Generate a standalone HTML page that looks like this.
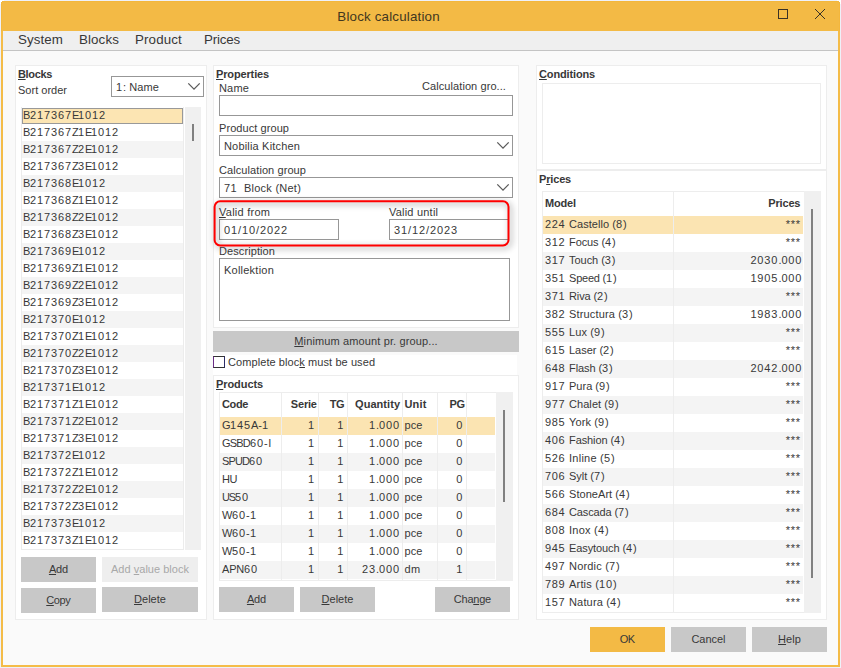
<!DOCTYPE html>
<html lang="en">
<head>
<meta charset="utf-8">
<title>Block calculation</title>
<style>
*{box-sizing:border-box;margin:0;padding:0}
html,body{width:841px;height:668px;overflow:hidden;background:#eef1f9}
body{font-family:"Liberation Sans",sans-serif;font-size:11px;color:#383838;position:relative}
body>*{position:absolute;white-space:nowrap}
u{text-decoration:underline;text-underline-offset:1px;text-decoration-thickness:1px}
.win{left:1px;top:1px;width:839px;height:666px;border:2px solid #f4bc48;background:#fafafa}
.title{left:1px;top:1px;width:839px;height:30px;background:#f3ba45;border:1px solid #f3b73c;border-bottom:0}
.cw{background:#fff}
.ttl{color:#42371f}
.ttl,.mi{font-size:13.33px}
.menu{left:3px;top:31px;width:835px;height:20px;background:#efefef;border-bottom:1px solid #c4c4c4}
.panel{background:#fff;border:1px solid #ededed}
.hd{font-weight:bold}
.combo,.inp{border:1px solid #979797;background:#fff}
.list{background:#fff;border:1px solid #ececec;border-top:0}
.g{background:#f4f4f4}
.lsel{background:#fce5b3;border:1px solid #999}
.sb{background:#f0f0f0}
.thumb{background:#808080}
.btn{background:#c8c8c8}
.btn.dis{background:#eeeeee}
.t.dis{color:#a8a8a8}
.btn.ok{background:#f3ba45}
.chkrow{background:#fff}
.chk{border:1px solid #333;border-left-color:#6a2c86;border-right-color:#2b2b66;background:#fff}
.hl{filter:drop-shadow(2px 2px 3px rgba(0,0,0,.45))}
.cbox{border:1px solid #ededed;background:#fff}
.tbl{border:1px solid #ededed;background:#fff}
.sel{background:#fbe4b2}
.vl{background:#ededed}

</style>
</head>
<body>
<div class="cw" style="left:0px;top:0px;width:4px;height:4px"></div>
<div class="cw" style="left:837px;top:0px;width:4px;height:4px"></div>
<div class="win"></div>
<div class="title"></div>
<div class="cw" style="left:1px;top:1px;width:1px;height:1px"></div>
<div class="cw" style="left:839px;top:1px;width:1px;height:1px"></div>
<div class="t ttl" style="left:1.09px;width:775px;text-align:center;top:8px;height:17px;line-height:17px;letter-spacing:0.19px">Block calculation</div>
<svg style="left:776px;top:7px" width="14" height="14" viewBox="0 0 14 14"><rect x="2.5" y="2.5" width="9" height="9" fill="none" stroke="#3a3226" stroke-width="1"/></svg>
<svg style="left:813px;top:7px" width="14" height="14" viewBox="0 0 14 14"><path d="M2 2 L12 12 M12 2 L2 12" fill="none" stroke="#3a3226" stroke-width="1"/></svg>
<div class="menu"></div>
<div class="t mi" style="left:18px;top:31px;height:18px;line-height:18px;letter-spacing:0.09px">System</div>
<div class="t mi" style="left:79px;top:31px;height:18px;line-height:18px;letter-spacing:0.12px">Blocks</div>
<div class="t mi" style="left:135px;top:31px;height:18px;line-height:18px;letter-spacing:0.14px">Product</div>
<div class="t mi" style="left:204px;top:31px;height:18px;line-height:18px;letter-spacing:-0.17px">Prices</div>
<div class="panel" style="left:15px;top:65px;width:192px;height:555px"></div>
<div class="t hd" style="left:18px;top:67px;height:14px;line-height:14px;letter-spacing:-0.35px"><u>B</u>locks</div>
<div class="t" style="left:18px;top:83px;height:14px;line-height:14px;letter-spacing:0.01px">Sort order</div>
<div class="combo" style="left:111px;top:76px;width:93px;height:21px"></div>
<div class="t" style="left:116px;top:80px;height:14px;line-height:14px"><span style="letter-spacing:0.88px">1</span><span style="letter-spacing:0.09px">: Name</span></div>
<svg style="left:187px;top:82px" width="15" height="10" viewBox="0 0 15 10"><path d="M1.3 1.4 L7 7.1 L12.7 1.4" fill="none" stroke="#5a5a5a" stroke-width="1.3"/></svg>
<div class="list" style="left:21px;top:107px;width:163px;height:443px"></div>
<div class="lsel" style="left:22px;top:108px;width:161px;height:16px"></div>
<div class="t" style="left:23px;top:107px;height:17px;line-height:17px"><span style="letter-spacing:-0.34px">B</span><span style="letter-spacing:0.88px">217367</span><span style="letter-spacing:-1.34px">E</span><span style="letter-spacing:0.88px">1012</span></div>
<div class="t" style="left:23px;top:124px;height:17px;line-height:17px"><span style="letter-spacing:-0.34px">B</span><span style="letter-spacing:0.88px">217367</span><span style="letter-spacing:-0.72px">Z</span><span style="letter-spacing:0.88px">1</span><span style="letter-spacing:-1.34px">E</span><span style="letter-spacing:0.88px">1012</span></div>
<div class="g" style="left:22px;top:141px;width:161px;height:17px"></div>
<div class="t" style="left:23px;top:141px;height:17px;line-height:17px"><span style="letter-spacing:-0.34px">B</span><span style="letter-spacing:0.88px">217367</span><span style="letter-spacing:-0.72px">Z</span><span style="letter-spacing:0.88px">2</span><span style="letter-spacing:-1.34px">E</span><span style="letter-spacing:0.88px">1012</span></div>
<div class="t" style="left:23px;top:158px;height:17px;line-height:17px"><span style="letter-spacing:-0.34px">B</span><span style="letter-spacing:0.88px">217367</span><span style="letter-spacing:-0.72px">Z</span><span style="letter-spacing:0.88px">3</span><span style="letter-spacing:-1.34px">E</span><span style="letter-spacing:0.88px">1012</span></div>
<div class="g" style="left:22px;top:175px;width:161px;height:17px"></div>
<div class="t" style="left:23px;top:175px;height:17px;line-height:17px"><span style="letter-spacing:-0.34px">B</span><span style="letter-spacing:0.88px">217368</span><span style="letter-spacing:-1.34px">E</span><span style="letter-spacing:0.88px">1012</span></div>
<div class="t" style="left:23px;top:192px;height:17px;line-height:17px"><span style="letter-spacing:-0.34px">B</span><span style="letter-spacing:0.88px">217368</span><span style="letter-spacing:-0.72px">Z</span><span style="letter-spacing:0.88px">1</span><span style="letter-spacing:-1.34px">E</span><span style="letter-spacing:0.88px">1012</span></div>
<div class="g" style="left:22px;top:209px;width:161px;height:17px"></div>
<div class="t" style="left:23px;top:209px;height:17px;line-height:17px"><span style="letter-spacing:-0.34px">B</span><span style="letter-spacing:0.88px">217368</span><span style="letter-spacing:-0.72px">Z</span><span style="letter-spacing:0.88px">2</span><span style="letter-spacing:-1.34px">E</span><span style="letter-spacing:0.88px">1012</span></div>
<div class="t" style="left:23px;top:226px;height:17px;line-height:17px"><span style="letter-spacing:-0.34px">B</span><span style="letter-spacing:0.88px">217368</span><span style="letter-spacing:-0.72px">Z</span><span style="letter-spacing:0.88px">3</span><span style="letter-spacing:-1.34px">E</span><span style="letter-spacing:0.88px">1012</span></div>
<div class="g" style="left:22px;top:243px;width:161px;height:17px"></div>
<div class="t" style="left:23px;top:243px;height:17px;line-height:17px"><span style="letter-spacing:-0.34px">B</span><span style="letter-spacing:0.88px">217369</span><span style="letter-spacing:-1.34px">E</span><span style="letter-spacing:0.88px">1012</span></div>
<div class="t" style="left:23px;top:260px;height:17px;line-height:17px"><span style="letter-spacing:-0.34px">B</span><span style="letter-spacing:0.88px">217369</span><span style="letter-spacing:-0.72px">Z</span><span style="letter-spacing:0.88px">1</span><span style="letter-spacing:-1.34px">E</span><span style="letter-spacing:0.88px">1012</span></div>
<div class="g" style="left:22px;top:277px;width:161px;height:17px"></div>
<div class="t" style="left:23px;top:277px;height:17px;line-height:17px"><span style="letter-spacing:-0.34px">B</span><span style="letter-spacing:0.88px">217369</span><span style="letter-spacing:-0.72px">Z</span><span style="letter-spacing:0.88px">2</span><span style="letter-spacing:-1.34px">E</span><span style="letter-spacing:0.88px">1012</span></div>
<div class="t" style="left:23px;top:294px;height:17px;line-height:17px"><span style="letter-spacing:-0.34px">B</span><span style="letter-spacing:0.88px">217369</span><span style="letter-spacing:-0.72px">Z</span><span style="letter-spacing:0.88px">3</span><span style="letter-spacing:-1.34px">E</span><span style="letter-spacing:0.88px">1012</span></div>
<div class="g" style="left:22px;top:311px;width:161px;height:17px"></div>
<div class="t" style="left:23px;top:311px;height:17px;line-height:17px"><span style="letter-spacing:-0.34px">B</span><span style="letter-spacing:0.88px">217370</span><span style="letter-spacing:-1.34px">E</span><span style="letter-spacing:0.88px">1012</span></div>
<div class="t" style="left:23px;top:328px;height:17px;line-height:17px"><span style="letter-spacing:-0.34px">B</span><span style="letter-spacing:0.88px">217370</span><span style="letter-spacing:-0.72px">Z</span><span style="letter-spacing:0.88px">1</span><span style="letter-spacing:-1.34px">E</span><span style="letter-spacing:0.88px">1012</span></div>
<div class="g" style="left:22px;top:345px;width:161px;height:17px"></div>
<div class="t" style="left:23px;top:345px;height:17px;line-height:17px"><span style="letter-spacing:-0.34px">B</span><span style="letter-spacing:0.88px">217370</span><span style="letter-spacing:-0.72px">Z</span><span style="letter-spacing:0.88px">2</span><span style="letter-spacing:-1.34px">E</span><span style="letter-spacing:0.88px">1012</span></div>
<div class="t" style="left:23px;top:362px;height:17px;line-height:17px"><span style="letter-spacing:-0.34px">B</span><span style="letter-spacing:0.88px">217370</span><span style="letter-spacing:-0.72px">Z</span><span style="letter-spacing:0.88px">3</span><span style="letter-spacing:-1.34px">E</span><span style="letter-spacing:0.88px">1012</span></div>
<div class="g" style="left:22px;top:379px;width:161px;height:17px"></div>
<div class="t" style="left:23px;top:379px;height:17px;line-height:17px"><span style="letter-spacing:-0.34px">B</span><span style="letter-spacing:0.88px">217371</span><span style="letter-spacing:-1.34px">E</span><span style="letter-spacing:0.88px">1012</span></div>
<div class="t" style="left:23px;top:396px;height:17px;line-height:17px"><span style="letter-spacing:-0.34px">B</span><span style="letter-spacing:0.88px">217371</span><span style="letter-spacing:-0.72px">Z</span><span style="letter-spacing:0.88px">1</span><span style="letter-spacing:-1.34px">E</span><span style="letter-spacing:0.88px">1012</span></div>
<div class="g" style="left:22px;top:413px;width:161px;height:17px"></div>
<div class="t" style="left:23px;top:413px;height:17px;line-height:17px"><span style="letter-spacing:-0.34px">B</span><span style="letter-spacing:0.88px">217371</span><span style="letter-spacing:-0.72px">Z</span><span style="letter-spacing:0.88px">2</span><span style="letter-spacing:-1.34px">E</span><span style="letter-spacing:0.88px">1012</span></div>
<div class="t" style="left:23px;top:430px;height:17px;line-height:17px"><span style="letter-spacing:-0.34px">B</span><span style="letter-spacing:0.88px">217371</span><span style="letter-spacing:-0.72px">Z</span><span style="letter-spacing:0.88px">3</span><span style="letter-spacing:-1.34px">E</span><span style="letter-spacing:0.88px">1012</span></div>
<div class="g" style="left:22px;top:447px;width:161px;height:17px"></div>
<div class="t" style="left:23px;top:447px;height:17px;line-height:17px"><span style="letter-spacing:-0.34px">B</span><span style="letter-spacing:0.88px">217372</span><span style="letter-spacing:-1.34px">E</span><span style="letter-spacing:0.88px">1012</span></div>
<div class="t" style="left:23px;top:464px;height:17px;line-height:17px"><span style="letter-spacing:-0.34px">B</span><span style="letter-spacing:0.88px">217372</span><span style="letter-spacing:-0.72px">Z</span><span style="letter-spacing:0.88px">1</span><span style="letter-spacing:-1.34px">E</span><span style="letter-spacing:0.88px">1012</span></div>
<div class="g" style="left:22px;top:481px;width:161px;height:17px"></div>
<div class="t" style="left:23px;top:481px;height:17px;line-height:17px"><span style="letter-spacing:-0.34px">B</span><span style="letter-spacing:0.88px">217372</span><span style="letter-spacing:-0.72px">Z</span><span style="letter-spacing:0.88px">2</span><span style="letter-spacing:-1.34px">E</span><span style="letter-spacing:0.88px">1012</span></div>
<div class="t" style="left:23px;top:498px;height:17px;line-height:17px"><span style="letter-spacing:-0.34px">B</span><span style="letter-spacing:0.88px">217372</span><span style="letter-spacing:-0.72px">Z</span><span style="letter-spacing:0.88px">3</span><span style="letter-spacing:-1.34px">E</span><span style="letter-spacing:0.88px">1012</span></div>
<div class="g" style="left:22px;top:515px;width:161px;height:17px"></div>
<div class="t" style="left:23px;top:515px;height:17px;line-height:17px"><span style="letter-spacing:-0.34px">B</span><span style="letter-spacing:0.88px">217373</span><span style="letter-spacing:-1.34px">E</span><span style="letter-spacing:0.88px">1012</span></div>
<div class="t" style="left:23px;top:532px;height:17px;line-height:17px"><span style="letter-spacing:-0.34px">B</span><span style="letter-spacing:0.88px">217373</span><span style="letter-spacing:-0.72px">Z</span><span style="letter-spacing:0.88px">1</span><span style="letter-spacing:-1.34px">E</span><span style="letter-spacing:0.88px">1012</span></div>
<div class="sb" style="left:185px;top:107px;width:16px;height:443px"></div>
<div class="thumb" style="left:192px;top:124px;width:2px;height:17px"></div>
<div class="btn" style="left:21px;top:557px;width:75px;height:25px"></div>
<div class="t bt" style="left:20.91px;width:75px;text-align:center;top:557px;height:25px;line-height:25px;letter-spacing:-0.19px"><u>A</u>dd</div>
<div class="btn dis" style="left:102px;top:557px;width:96px;height:25px"></div>
<div class="t bt dis" style="left:102.01px;width:96px;text-align:center;top:557px;height:25px;line-height:25px;letter-spacing:0.02px">Add <u>v</u>alue block</div>
<div class="btn" style="left:21px;top:588px;width:75px;height:25px"></div>
<div class="t bt" style="left:20.79px;width:75px;text-align:center;top:588px;height:25px;line-height:25px;letter-spacing:-0.42px"><u>C</u>opy</div>
<div class="btn" style="left:102px;top:587px;width:96px;height:25px"></div>
<div class="t bt" style="left:102.02px;width:96px;text-align:center;top:587px;height:25px;line-height:25px;letter-spacing:0.03px"><u>D</u>elete</div>
<div class="panel" style="left:213px;top:65px;width:306px;height:263px"></div>
<div class="t hd" style="left:216px;top:67px;height:14px;line-height:14px;letter-spacing:-0.14px"><u>P</u>roperties</div>
<div class="t" style="left:219px;top:81px;height:14px;line-height:14px;letter-spacing:0.16px">Name</div>
<div class="t" style="left:422px;top:79px;height:14px;line-height:14px;letter-spacing:0.08px">Calculation gro...</div>
<div class="inp" style="left:219px;top:95px;width:294px;height:21px"></div>
<div class="t" style="left:219px;top:121px;height:14px;line-height:14px;letter-spacing:0.07px">Product group</div>
<div class="combo" style="left:219px;top:135px;width:294px;height:21px"></div>
<div class="t" style="left:224px;top:139px;height:14px;line-height:14px;letter-spacing:0.18px">Nobilia Kitchen</div>
<svg style="left:496px;top:141px" width="15" height="10" viewBox="0 0 15 10"><path d="M1.3 1.4 L7 7.1 L12.7 1.4" fill="none" stroke="#5a5a5a" stroke-width="1.3"/></svg>
<div class="t" style="left:219px;top:163px;height:14px;line-height:14px;letter-spacing:0.08px">Calculation group</div>
<div class="combo" style="left:219px;top:177px;width:294px;height:21px"></div>
<div class="t" style="left:224px;top:181px;height:14px;line-height:14px"><span style="letter-spacing:0.41px">71&nbsp; </span><span style="letter-spacing:0.24px">Block (Net)</span></div>
<svg style="left:496px;top:183px" width="15" height="10" viewBox="0 0 15 10"><path d="M1.3 1.4 L7 7.1 L12.7 1.4" fill="none" stroke="#5a5a5a" stroke-width="1.3"/></svg>
<div class="t" style="left:219px;top:205px;height:14px;line-height:14px;letter-spacing:0.25px"><u>V</u>alid from</div>
<div class="inp" style="left:219px;top:219px;width:120px;height:21px"></div>
<div class="t" style="left:224px;top:223px;height:14px;line-height:14px"><span style="letter-spacing:0.88px">01</span><span style="letter-spacing:0.94px">/</span><span style="letter-spacing:0.88px">10</span><span style="letter-spacing:0.94px">/</span><span style="letter-spacing:0.88px">2022</span></div>
<div class="t" style="left:389px;top:205px;height:14px;line-height:14px;letter-spacing:0.21px">Valid until</div>
<div class="inp" style="left:389px;top:219px;width:120px;height:21px;border-right:0"></div>
<div class="t" style="left:394px;top:223px;height:14px;line-height:14px"><span style="letter-spacing:0.88px">31</span><span style="letter-spacing:0.94px">/</span><span style="letter-spacing:0.88px">12</span><span style="letter-spacing:0.94px">/</span><span style="letter-spacing:0.88px">2023</span></div>
<svg class="hl" style="left:205px;top:192px" width="320" height="70" viewBox="0 0 320 70"><rect x="9.6" y="9.35" width="293.9" height="44.05" rx="5.5" ry="5.5" fill="none" stroke="#ff0000" stroke-width="2"/></svg>
<div class="t" style="left:219px;top:244px;height:14px;line-height:14px;letter-spacing:0.09px">Description</div>
<div class="inp" style="left:219px;top:258px;width:291px;height:63px"></div>
<div class="t" style="left:224px;top:263px;height:14px;line-height:14px;letter-spacing:0.23px">Kollektion</div>
<div class="btn" style="left:213px;top:331px;width:306px;height:21px"></div>
<div class="t bt" style="left:213.06px;width:306px;text-align:center;top:331px;height:21px;line-height:21px;letter-spacing:0.13px"><u>M</u>inimum amount pr. group...</div>
<div class="chkrow" style="left:213px;top:355px;width:304px;height:20px"></div>
<div class="chk" style="left:213px;top:356px;width:12px;height:12px"></div>
<div class="t" style="left:228px;top:355px;height:14px;line-height:14px;letter-spacing:0.08px">Complete bloc<u>k</u> must be used</div>
<div class="panel" style="left:213px;top:375px;width:306px;height:245px"></div>
<div class="t hd" style="left:216px;top:377px;height:14px;line-height:14px;letter-spacing:-0.08px"><u>P</u>roducts</div>
<div class="tbl" style="left:219px;top:392px;width:279px;height:189px"></div>
<div class="t hd" style="left:222px;top:392px;height:24px;line-height:24px;letter-spacing:-0.38px">Code</div>
<div class="t hd" style="left:256.82px;width:60px;text-align:right;top:392px;height:24px;line-height:24px;letter-spacing:-0.18px">Serie</div>
<div class="t hd" style="left:283.86px;width:60px;text-align:right;top:392px;height:24px;line-height:24px;letter-spacing:-0.64px">TG</div>
<div class="t hd" style="left:340.05px;width:60px;text-align:right;top:392px;height:24px;line-height:24px;letter-spacing:0.05px">Quantity</div>
<div class="t hd" style="left:404.5px;top:392px;height:24px;line-height:24px;letter-spacing:0.15px">Unit</div>
<div class="t hd" style="left:404.55px;width:60px;text-align:right;top:392px;height:24px;line-height:24px;letter-spacing:-0.45px">PG</div>
<div class="sel" style="left:220px;top:417px;width:275px;height:18px"></div>
<div class="t" style="left:222px;top:416px;height:18px;line-height:18px"><span style="letter-spacing:-0.56px">G</span><span style="letter-spacing:0.88px">145</span><span style="letter-spacing:0.0px">A-</span><span style="letter-spacing:0.88px">1</span></div>
<div class="t" style="left:255.08px;width:60px;text-align:right;top:416px;height:18px;line-height:18px;letter-spacing:0.88px">1</div>
<div class="t" style="left:284.18px;width:60px;text-align:right;top:416px;height:18px;line-height:18px;letter-spacing:0.88px">1</div>
<div class="t" style="left:340.08px;width:60px;text-align:right;top:416px;height:18px;line-height:18px"><span style="letter-spacing:0.88px">1</span><span style="letter-spacing:-0.06px">.</span><span style="letter-spacing:0.88px">000</span></div>
<div class="t" style="left:404.5px;top:416px;height:18px;line-height:18px;letter-spacing:0.09px">pce</div>
<div class="t" style="left:403.18px;width:60px;text-align:right;top:416px;height:18px;line-height:18px;letter-spacing:0.88px">0</div>
<div class="t" style="left:222px;top:434px;height:18px;line-height:18px"><span style="letter-spacing:-0.79px">GSBD</span><span style="letter-spacing:0.88px">60</span><span style="letter-spacing:0.64px">-I</span></div>
<div class="t" style="left:255.08px;width:60px;text-align:right;top:434px;height:18px;line-height:18px;letter-spacing:0.88px">1</div>
<div class="t" style="left:284.18px;width:60px;text-align:right;top:434px;height:18px;line-height:18px;letter-spacing:0.88px">1</div>
<div class="t" style="left:340.08px;width:60px;text-align:right;top:434px;height:18px;line-height:18px"><span style="letter-spacing:0.88px">1</span><span style="letter-spacing:-0.06px">.</span><span style="letter-spacing:0.88px">000</span></div>
<div class="t" style="left:404.5px;top:434px;height:18px;line-height:18px;letter-spacing:0.09px">pce</div>
<div class="t" style="left:403.18px;width:60px;text-align:right;top:434px;height:18px;line-height:18px;letter-spacing:0.88px">0</div>
<div class="g" style="left:220px;top:453px;width:275px;height:18px"></div>
<div class="t" style="left:222px;top:452px;height:18px;line-height:18px"><span style="letter-spacing:-0.89px">SPUD</span><span style="letter-spacing:0.88px">60</span></div>
<div class="t" style="left:255.08px;width:60px;text-align:right;top:452px;height:18px;line-height:18px;letter-spacing:0.88px">1</div>
<div class="t" style="left:284.18px;width:60px;text-align:right;top:452px;height:18px;line-height:18px;letter-spacing:0.88px">1</div>
<div class="t" style="left:340.08px;width:60px;text-align:right;top:452px;height:18px;line-height:18px"><span style="letter-spacing:0.88px">1</span><span style="letter-spacing:-0.06px">.</span><span style="letter-spacing:0.88px">000</span></div>
<div class="t" style="left:404.5px;top:452px;height:18px;line-height:18px;letter-spacing:0.09px">pce</div>
<div class="t" style="left:403.18px;width:60px;text-align:right;top:452px;height:18px;line-height:18px;letter-spacing:0.88px">0</div>
<div class="t" style="left:222px;top:470px;height:18px;line-height:18px;letter-spacing:-0.44px">HU</div>
<div class="t" style="left:255.08px;width:60px;text-align:right;top:470px;height:18px;line-height:18px;letter-spacing:0.88px">1</div>
<div class="t" style="left:284.18px;width:60px;text-align:right;top:470px;height:18px;line-height:18px;letter-spacing:0.88px">1</div>
<div class="t" style="left:340.08px;width:60px;text-align:right;top:470px;height:18px;line-height:18px"><span style="letter-spacing:0.88px">1</span><span style="letter-spacing:-0.06px">.</span><span style="letter-spacing:0.88px">000</span></div>
<div class="t" style="left:404.5px;top:470px;height:18px;line-height:18px;letter-spacing:0.09px">pce</div>
<div class="t" style="left:403.18px;width:60px;text-align:right;top:470px;height:18px;line-height:18px;letter-spacing:0.88px">0</div>
<div class="g" style="left:220px;top:489px;width:275px;height:18px"></div>
<div class="t" style="left:222px;top:488px;height:18px;line-height:18px"><span style="letter-spacing:-1.14px">US</span><span style="letter-spacing:0.88px">50</span></div>
<div class="t" style="left:255.08px;width:60px;text-align:right;top:488px;height:18px;line-height:18px;letter-spacing:0.88px">1</div>
<div class="t" style="left:284.18px;width:60px;text-align:right;top:488px;height:18px;line-height:18px;letter-spacing:0.88px">1</div>
<div class="t" style="left:340.08px;width:60px;text-align:right;top:488px;height:18px;line-height:18px"><span style="letter-spacing:0.88px">1</span><span style="letter-spacing:-0.06px">.</span><span style="letter-spacing:0.88px">000</span></div>
<div class="t" style="left:404.5px;top:488px;height:18px;line-height:18px;letter-spacing:0.09px">pce</div>
<div class="t" style="left:403.18px;width:60px;text-align:right;top:488px;height:18px;line-height:18px;letter-spacing:0.88px">0</div>
<div class="t" style="left:222px;top:506px;height:18px;line-height:18px"><span style="letter-spacing:-0.38px">W</span><span style="letter-spacing:0.88px">60</span><span style="letter-spacing:0.34px">-</span><span style="letter-spacing:0.88px">1</span></div>
<div class="t" style="left:255.08px;width:60px;text-align:right;top:506px;height:18px;line-height:18px;letter-spacing:0.88px">1</div>
<div class="t" style="left:284.18px;width:60px;text-align:right;top:506px;height:18px;line-height:18px;letter-spacing:0.88px">1</div>
<div class="t" style="left:340.08px;width:60px;text-align:right;top:506px;height:18px;line-height:18px"><span style="letter-spacing:0.88px">1</span><span style="letter-spacing:-0.06px">.</span><span style="letter-spacing:0.88px">000</span></div>
<div class="t" style="left:404.5px;top:506px;height:18px;line-height:18px;letter-spacing:0.09px">pce</div>
<div class="t" style="left:403.18px;width:60px;text-align:right;top:506px;height:18px;line-height:18px;letter-spacing:0.88px">0</div>
<div class="g" style="left:220px;top:525px;width:275px;height:18px"></div>
<div class="t" style="left:222px;top:524px;height:18px;line-height:18px"><span style="letter-spacing:-0.38px">W</span><span style="letter-spacing:0.88px">60</span><span style="letter-spacing:0.34px">-</span><span style="letter-spacing:0.88px">1</span></div>
<div class="t" style="left:255.08px;width:60px;text-align:right;top:524px;height:18px;line-height:18px;letter-spacing:0.88px">1</div>
<div class="t" style="left:284.18px;width:60px;text-align:right;top:524px;height:18px;line-height:18px;letter-spacing:0.88px">1</div>
<div class="t" style="left:340.08px;width:60px;text-align:right;top:524px;height:18px;line-height:18px"><span style="letter-spacing:0.88px">1</span><span style="letter-spacing:-0.06px">.</span><span style="letter-spacing:0.88px">000</span></div>
<div class="t" style="left:404.5px;top:524px;height:18px;line-height:18px;letter-spacing:0.09px">pce</div>
<div class="t" style="left:403.18px;width:60px;text-align:right;top:524px;height:18px;line-height:18px;letter-spacing:0.88px">0</div>
<div class="t" style="left:222px;top:542px;height:18px;line-height:18px"><span style="letter-spacing:-0.38px">W</span><span style="letter-spacing:0.88px">50</span><span style="letter-spacing:0.34px">-</span><span style="letter-spacing:0.88px">1</span></div>
<div class="t" style="left:255.08px;width:60px;text-align:right;top:542px;height:18px;line-height:18px;letter-spacing:0.88px">1</div>
<div class="t" style="left:284.18px;width:60px;text-align:right;top:542px;height:18px;line-height:18px;letter-spacing:0.88px">1</div>
<div class="t" style="left:340.08px;width:60px;text-align:right;top:542px;height:18px;line-height:18px"><span style="letter-spacing:0.88px">1</span><span style="letter-spacing:-0.06px">.</span><span style="letter-spacing:0.88px">000</span></div>
<div class="t" style="left:404.5px;top:542px;height:18px;line-height:18px;letter-spacing:0.09px">pce</div>
<div class="t" style="left:403.18px;width:60px;text-align:right;top:542px;height:18px;line-height:18px;letter-spacing:0.88px">0</div>
<div class="g" style="left:220px;top:561px;width:275px;height:18px"></div>
<div class="t" style="left:222px;top:560px;height:18px;line-height:18px"><span style="letter-spacing:-0.21px">APN</span><span style="letter-spacing:0.88px">60</span></div>
<div class="t" style="left:255.08px;width:60px;text-align:right;top:560px;height:18px;line-height:18px;letter-spacing:0.88px">1</div>
<div class="t" style="left:284.18px;width:60px;text-align:right;top:560px;height:18px;line-height:18px;letter-spacing:0.88px">1</div>
<div class="t" style="left:340.08px;width:60px;text-align:right;top:560px;height:18px;line-height:18px"><span style="letter-spacing:0.88px">23</span><span style="letter-spacing:-0.06px">.</span><span style="letter-spacing:0.88px">000</span></div>
<div class="t" style="left:404.5px;top:560px;height:18px;line-height:18px;letter-spacing:0.36px">dm</div>
<div class="t" style="left:403.18px;width:60px;text-align:right;top:560px;height:18px;line-height:18px;letter-spacing:0.88px">1</div>
<div class="vl" style="left:281px;top:393px;width:1px;height:187px"></div>
<div class="vl" style="left:318px;top:393px;width:1px;height:187px"></div>
<div class="vl" style="left:347px;top:393px;width:1px;height:187px"></div>
<div class="vl" style="left:402px;top:393px;width:1px;height:187px"></div>
<div class="vl" style="left:437px;top:393px;width:1px;height:187px"></div>
<div class="vl" style="left:466px;top:393px;width:1px;height:187px"></div>
<div class="sb" style="left:496px;top:392px;width:17px;height:189px"></div>
<div class="thumb" style="left:503px;top:410px;width:2px;height:92px"></div>
<div class="btn" style="left:219px;top:587px;width:75px;height:25px"></div>
<div class="t bt" style="left:218.91px;width:75px;text-align:center;top:587px;height:25px;line-height:25px;letter-spacing:-0.19px"><u>A</u>dd</div>
<div class="btn" style="left:300px;top:587px;width:75px;height:25px"></div>
<div class="t bt" style="left:300.01px;width:75px;text-align:center;top:587px;height:25px;line-height:25px;letter-spacing:0.03px"><u>D</u>elete</div>
<div class="btn" style="left:435px;top:587px;width:75px;height:25px"></div>
<div class="t bt" style="left:434.87px;width:75px;text-align:center;top:587px;height:25px;line-height:25px;letter-spacing:-0.26px">Cha<u>n</u>ge</div>
<div class="panel" style="left:536px;top:65px;width:291px;height:105px"></div>
<div class="t hd" style="left:539px;top:67px;height:14px;line-height:14px;letter-spacing:-0.14px"><u>C</u>onditions</div>
<div class="cbox" style="left:542px;top:83px;width:279px;height:81px"></div>
<div class="panel" style="left:536px;top:170px;width:291px;height:450px"></div>
<div class="t hd" style="left:539px;top:172px;height:14px;line-height:14px;letter-spacing:-0.17px">P<u>r</u>ices</div>
<div class="tbl" style="left:542px;top:191px;width:263px;height:422px"></div>
<div class="t hd" style="left:545px;top:191px;height:24px;line-height:24px;letter-spacing:-0.16px">Model</div>
<div class="t hd" style="left:700.33px;width:100px;text-align:right;top:191px;height:24px;line-height:24px;letter-spacing:-0.17px">Prices</div>
<div class="sel" style="left:543px;top:216px;width:260px;height:18px"></div>
<div class="t" style="left:545px;top:215px;height:18px;line-height:18px"><span style="letter-spacing:0.65px">224 </span><span style="letter-spacing:0.05px">Castello (</span><span style="letter-spacing:0.88px">8</span><span style="letter-spacing:0.34px">)</span></div>
<div class="t" style="left:700.72px;width:100px;text-align:right;top:215px;height:18px;line-height:18px;letter-spacing:0.72px">***</div>
<div class="t" style="left:545px;top:233px;height:18px;line-height:18px"><span style="letter-spacing:0.65px">312 </span><span style="letter-spacing:-0.1px">Focus (</span><span style="letter-spacing:0.88px">4</span><span style="letter-spacing:0.34px">)</span></div>
<div class="t" style="left:700.72px;width:100px;text-align:right;top:233px;height:18px;line-height:18px;letter-spacing:0.72px">***</div>
<div class="g" style="left:543px;top:252px;width:260px;height:18px"></div>
<div class="t" style="left:545px;top:251px;height:18px;line-height:18px"><span style="letter-spacing:0.65px">317 </span><span style="letter-spacing:-0.04px">Touch (</span><span style="letter-spacing:0.88px">3</span><span style="letter-spacing:0.34px">)</span></div>
<div class="t" style="left:702.38px;width:100px;text-align:right;top:251px;height:18px;line-height:18px"><span style="letter-spacing:0.88px">2030</span><span style="letter-spacing:-0.06px">.</span><span style="letter-spacing:0.88px">000</span></div>
<div class="t" style="left:545px;top:269px;height:18px;line-height:18px"><span style="letter-spacing:0.65px">351 </span><span style="letter-spacing:-0.22px">Speed (</span><span style="letter-spacing:0.88px">1</span><span style="letter-spacing:0.34px">)</span></div>
<div class="t" style="left:702.38px;width:100px;text-align:right;top:269px;height:18px;line-height:18px"><span style="letter-spacing:0.88px">1905</span><span style="letter-spacing:-0.06px">.</span><span style="letter-spacing:0.88px">000</span></div>
<div class="g" style="left:543px;top:288px;width:260px;height:18px"></div>
<div class="t" style="left:545px;top:287px;height:18px;line-height:18px"><span style="letter-spacing:0.65px">371 </span><span style="letter-spacing:-0.12px">Riva (</span><span style="letter-spacing:0.88px">2</span><span style="letter-spacing:0.34px">)</span></div>
<div class="t" style="left:700.72px;width:100px;text-align:right;top:287px;height:18px;line-height:18px;letter-spacing:0.72px">***</div>
<div class="t" style="left:545px;top:305px;height:18px;line-height:18px"><span style="letter-spacing:0.65px">382 </span><span style="letter-spacing:0.15px">Structura (</span><span style="letter-spacing:0.88px">3</span><span style="letter-spacing:0.34px">)</span></div>
<div class="t" style="left:702.38px;width:100px;text-align:right;top:305px;height:18px;line-height:18px"><span style="letter-spacing:0.88px">1983</span><span style="letter-spacing:-0.06px">.</span><span style="letter-spacing:0.88px">000</span></div>
<div class="g" style="left:543px;top:324px;width:260px;height:18px"></div>
<div class="t" style="left:545px;top:323px;height:18px;line-height:18px"><span style="letter-spacing:0.65px">555 </span><span style="letter-spacing:0.11px">Lux (</span><span style="letter-spacing:0.88px">9</span><span style="letter-spacing:0.34px">)</span></div>
<div class="t" style="left:700.72px;width:100px;text-align:right;top:323px;height:18px;line-height:18px;letter-spacing:0.72px">***</div>
<div class="t" style="left:545px;top:341px;height:18px;line-height:18px"><span style="letter-spacing:0.65px">615 </span><span style="letter-spacing:-0.03px">Laser (</span><span style="letter-spacing:0.88px">2</span><span style="letter-spacing:0.34px">)</span></div>
<div class="t" style="left:700.72px;width:100px;text-align:right;top:341px;height:18px;line-height:18px;letter-spacing:0.72px">***</div>
<div class="g" style="left:543px;top:360px;width:260px;height:18px"></div>
<div class="t" style="left:545px;top:359px;height:18px;line-height:18px"><span style="letter-spacing:0.65px">648 </span><span style="letter-spacing:-0.09px">Flash (</span><span style="letter-spacing:0.88px">3</span><span style="letter-spacing:0.34px">)</span></div>
<div class="t" style="left:702.38px;width:100px;text-align:right;top:359px;height:18px;line-height:18px"><span style="letter-spacing:0.88px">2042</span><span style="letter-spacing:-0.06px">.</span><span style="letter-spacing:0.88px">000</span></div>
<div class="t" style="left:545px;top:377px;height:18px;line-height:18px"><span style="letter-spacing:0.65px">917 </span><span style="letter-spacing:0.01px">Pura (</span><span style="letter-spacing:0.88px">9</span><span style="letter-spacing:0.34px">)</span></div>
<div class="t" style="left:700.72px;width:100px;text-align:right;top:377px;height:18px;line-height:18px;letter-spacing:0.72px">***</div>
<div class="g" style="left:543px;top:396px;width:260px;height:18px"></div>
<div class="t" style="left:545px;top:395px;height:18px;line-height:18px"><span style="letter-spacing:0.65px">977 </span><span style="letter-spacing:0.06px">Chalet (</span><span style="letter-spacing:0.88px">9</span><span style="letter-spacing:0.34px">)</span></div>
<div class="t" style="left:700.72px;width:100px;text-align:right;top:395px;height:18px;line-height:18px;letter-spacing:0.72px">***</div>
<div class="t" style="left:545px;top:413px;height:18px;line-height:18px"><span style="letter-spacing:0.65px">985 </span><span style="letter-spacing:0.11px">York (</span><span style="letter-spacing:0.88px">9</span><span style="letter-spacing:0.34px">)</span></div>
<div class="t" style="left:700.72px;width:100px;text-align:right;top:413px;height:18px;line-height:18px;letter-spacing:0.72px">***</div>
<div class="g" style="left:543px;top:432px;width:260px;height:18px"></div>
<div class="t" style="left:545px;top:431px;height:18px;line-height:18px"><span style="letter-spacing:0.65px">406 </span><span style="letter-spacing:-0.09px">Fashion (</span><span style="letter-spacing:0.88px">4</span><span style="letter-spacing:0.34px">)</span></div>
<div class="t" style="left:700.72px;width:100px;text-align:right;top:431px;height:18px;line-height:18px;letter-spacing:0.72px">***</div>
<div class="t" style="left:545px;top:449px;height:18px;line-height:18px"><span style="letter-spacing:0.65px">526 </span><span style="letter-spacing:0.25px">Inline (</span><span style="letter-spacing:0.88px">5</span><span style="letter-spacing:0.34px">)</span></div>
<div class="t" style="left:700.72px;width:100px;text-align:right;top:449px;height:18px;line-height:18px;letter-spacing:0.72px">***</div>
<div class="g" style="left:543px;top:468px;width:260px;height:18px"></div>
<div class="t" style="left:545px;top:467px;height:18px;line-height:18px"><span style="letter-spacing:0.65px">706 </span><span style="letter-spacing:-0.01px">Sylt (</span><span style="letter-spacing:0.88px">7</span><span style="letter-spacing:0.34px">)</span></div>
<div class="t" style="left:700.72px;width:100px;text-align:right;top:467px;height:18px;line-height:18px;letter-spacing:0.72px">***</div>
<div class="t" style="left:545px;top:485px;height:18px;line-height:18px"><span style="letter-spacing:0.65px">566 </span><span style="letter-spacing:0.05px">StoneArt (</span><span style="letter-spacing:0.88px">4</span><span style="letter-spacing:0.34px">)</span></div>
<div class="t" style="left:700.72px;width:100px;text-align:right;top:485px;height:18px;line-height:18px;letter-spacing:0.72px">***</div>
<div class="g" style="left:543px;top:504px;width:260px;height:18px"></div>
<div class="t" style="left:545px;top:503px;height:18px;line-height:18px"><span style="letter-spacing:0.65px">684 </span><span style="letter-spacing:-0.13px">Cascada (</span><span style="letter-spacing:0.88px">7</span><span style="letter-spacing:0.34px">)</span></div>
<div class="t" style="left:700.72px;width:100px;text-align:right;top:503px;height:18px;line-height:18px;letter-spacing:0.72px">***</div>
<div class="t" style="left:545px;top:521px;height:18px;line-height:18px"><span style="letter-spacing:0.65px">808 </span><span style="letter-spacing:0.25px">Inox (</span><span style="letter-spacing:0.88px">4</span><span style="letter-spacing:0.34px">)</span></div>
<div class="t" style="left:700.72px;width:100px;text-align:right;top:521px;height:18px;line-height:18px;letter-spacing:0.72px">***</div>
<div class="g" style="left:543px;top:540px;width:260px;height:18px"></div>
<div class="t" style="left:545px;top:539px;height:18px;line-height:18px"><span style="letter-spacing:0.65px">945 </span><span style="letter-spacing:-0.1px">Easytouch (</span><span style="letter-spacing:0.88px">4</span><span style="letter-spacing:0.34px">)</span></div>
<div class="t" style="left:700.72px;width:100px;text-align:right;top:539px;height:18px;line-height:18px;letter-spacing:0.72px">***</div>
<div class="t" style="left:545px;top:557px;height:18px;line-height:18px"><span style="letter-spacing:0.65px">497 </span><span style="letter-spacing:0.19px">Nordic (</span><span style="letter-spacing:0.88px">7</span><span style="letter-spacing:0.34px">)</span></div>
<div class="t" style="left:700.72px;width:100px;text-align:right;top:557px;height:18px;line-height:18px;letter-spacing:0.72px">***</div>
<div class="g" style="left:543px;top:576px;width:260px;height:18px"></div>
<div class="t" style="left:545px;top:575px;height:18px;line-height:18px"><span style="letter-spacing:0.65px">789 </span><span style="letter-spacing:0.18px">Artis (</span><span style="letter-spacing:0.88px">10</span><span style="letter-spacing:0.34px">)</span></div>
<div class="t" style="left:700.72px;width:100px;text-align:right;top:575px;height:18px;line-height:18px;letter-spacing:0.72px">***</div>
<div class="t" style="left:545px;top:593px;height:18px;line-height:18px"><span style="letter-spacing:0.65px">157 </span><span style="letter-spacing:0.16px">Natura (</span><span style="letter-spacing:0.88px">4</span><span style="letter-spacing:0.34px">)</span></div>
<div class="t" style="left:700.72px;width:100px;text-align:right;top:593px;height:18px;line-height:18px;letter-spacing:0.72px">***</div>
<div class="vl" style="left:673px;top:192px;width:1px;height:420px"></div>
<div class="sb" style="left:804px;top:191px;width:17px;height:422px"></div>
<div class="thumb" style="left:811px;top:209px;width:2px;height:369px"></div>
<div class="btn ok" style="left:590px;top:627px;width:75px;height:25px"></div>
<div class="t bt" style="left:589.77px;width:75px;text-align:center;top:627px;height:25px;line-height:25px;letter-spacing:-0.45px">OK</div>
<div class="btn" style="left:671px;top:627px;width:75px;height:25px"></div>
<div class="t bt" style="left:670.98px;width:75px;text-align:center;top:627px;height:25px;line-height:25px;letter-spacing:-0.04px">Cancel</div>
<div class="btn" style="left:752px;top:627px;width:75px;height:25px"></div>
<div class="t bt" style="left:752.04px;width:75px;text-align:center;top:627px;height:25px;line-height:25px;letter-spacing:0.09px"><u>H</u>elp</div>
</body>
</html>
